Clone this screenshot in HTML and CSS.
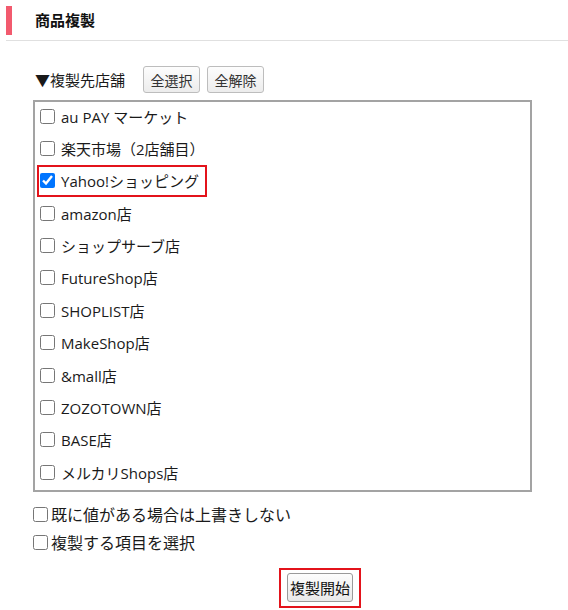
FILE: index.html
```html
<!DOCTYPE html>
<html lang="ja">

<head>
    <meta charset="UTF-8">
    <meta name="viewport" content="width=device-width, initial-scale=1.0">
    <title>商品複製</title>
    <link rel="stylesheet" href="styles.css">
</head>

<body>
    <div class="cabecalho">
        <h2 class="titulo">商品複製</h2>
    </div>

    <div class="conteudo">
        <div class="barra">
            <span class="rotulo">▼複製先店舗</span>
            <button class="botao-pequeno">全選択</button>
            <button class="botao-pequeno">全解除</button>
        </div>

        <div class="lista-lojas">
            <div class="loja"><label><input type="checkbox">au PAY マーケット</label></div>
            <div class="loja"><label><input type="checkbox">楽天市場（2店舗目）</label></div>
            <div class="loja"><label class="destaque"><input type="checkbox" checked>Yahoo!ショッピング</label></div>
            <div class="loja"><label><input type="checkbox">amazon店</label></div>
            <div class="loja"><label><input type="checkbox">ショップサーブ店</label></div>
            <div class="loja"><label><input type="checkbox">FutureShop店</label></div>
            <div class="loja"><label><input type="checkbox">SHOPLIST店</label></div>
            <div class="loja"><label><input type="checkbox">MakeShop店</label></div>
            <div class="loja"><label><input type="checkbox">&amp;mall店</label></div>
            <div class="loja"><label><input type="checkbox">ZOZOTOWN店</label></div>
            <div class="loja"><label><input type="checkbox">BASE店</label></div>
            <div class="loja"><label><input type="checkbox">メルカリShops店</label></div>
        </div>

        <div class="opcoes">
            <label class="opcao"><input type="checkbox">既に値がある場合は上書きしない</label>
            <label class="opcao"><input type="checkbox">複製する項目を選択</label>
        </div>

        <div class="acoes">
            <div class="moldura">
                <button class="iniciar">複製開始</button>
            </div>
        </div>
    </div>
</body>

</html>
```

FILE: styles.css
```css
body {
    margin: 0;
    font-family: "Open Sans", "Noto Sans CJK JP", sans-serif;
    color: #1a1a1a;
    background-color: #fff;
}

.cabecalho {
    margin-left: 6px;
    padding: 6px 0 5px;
    border-bottom: 1px solid #e0e0e0;
}

.titulo {
    margin: 0;
    height: 29px;
    line-height: 29px;
    padding-left: 23px;
    border-left: 6px solid #f25a6e;
    font-size: 15px;
    font-weight: bold;
    color: #111;
}

.conteudo {
    padding-left: 33px;
    margin-top: 25px;
}

.barra {
    display: flex;
    align-items: center;
    height: 27px;
    margin-bottom: 7px;
}

.rotulo {
    padding-left: 2px;
    margin-right: 18px;
    font-size: 15px;
}

.botao-pequeno {
    width: 57px;
    height: 27px;
    margin-right: 7px;
    padding: 0;
    border: 1px solid #bdbdbd;
    border-radius: 3px;
    background: linear-gradient(#fdfdfd, #ececec);
    font-family: inherit;
    font-size: 14px;
    color: #333;
}

.lista-lojas {
    width: 495px;
    border: 2px solid #a3a3a3;
    display: flex;
    flex-direction: column;
    gap: 4.4px;
    padding: 0 0 4px;
}

.loja {
    height: 28px;
    display: flex;
    align-items: center;
    padding-left: 2px;
}

.loja label {
    display: flex;
    align-items: center;
    height: 28px;
    padding: 0 6px 0 1px;
    border: 2px solid transparent;
    font-size: 15px;
    white-space: nowrap;
}

.loja label.destaque {
    border-color: #e3131b;
}

.loja input {
    width: 15px;
    height: 15px;
    margin: 0 6px 0 0;
}

.opcoes {
    display: flex;
    flex-direction: column;
    margin-top: 8px;
}

.opcao {
    display: flex;
    align-items: center;
    height: 28px;
    font-size: 16px;
}

.opcao input {
    width: 15px;
    height: 15px;
    margin: 0 3px 0 0;
}

.acoes {
    margin-top: 12px;
    padding-left: 246px;
}

.moldura {
    display: inline-block;
    padding: 3px 6px 4px;
    border: 2px solid #e3131b;
}

.iniciar {
    display: block;
    width: 66px;
    height: 29px;
    padding: 0;
    border: 1px solid #9a9a9a;
    border-radius: 3px;
    background: linear-gradient(#fdfdfd, #e9e9e9);
    font-family: inherit;
    font-size: 15px;
    color: #111;
}
```
